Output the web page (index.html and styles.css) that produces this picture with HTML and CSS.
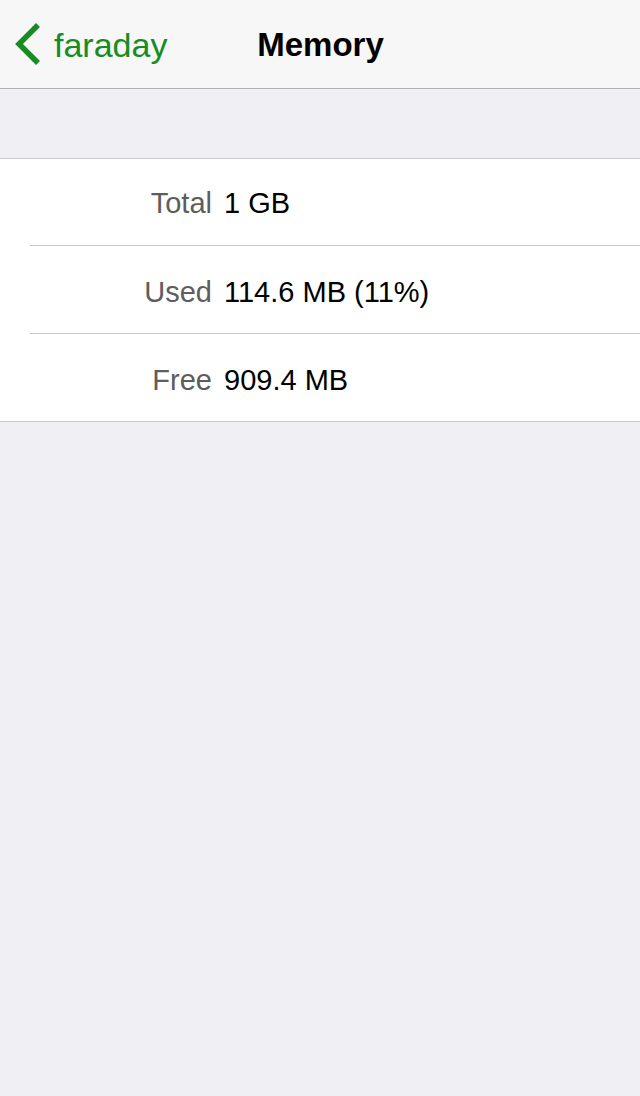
FILE: index.html
```html
<!DOCTYPE html>
<html>
<head>
<meta charset="utf-8">
<link rel="stylesheet" href="styles.css">
</head>
<body>
<header class="navbar">
  <a class="back">
    <svg class="chevron" width="30" height="42" viewBox="0 0 30 42"><path d="M24 2 L5 21 L24 40" fill="none" stroke="#168c22" stroke-width="5.5"/></svg>
    <span class="back-label">faraday</span>
  </a>
  <h1 class="title">Memory</h1>
</header>
<main class="content">
  <section class="group">
    <div class="row"><span class="label">Total</span><span class="value">1 GB</span></div>
    <div class="row"><span class="label">Used</span><span class="value">114.6 MB (11%)</span></div>
    <div class="row"><span class="label">Free</span><span class="value">909.4 MB</span></div>
  </section>
</main>
</body>
</html>
```
FILE: styles.css
```css
html, body {
  margin: 0;
  padding: 0;
  height: 100%;
}
body {
  background: #efeff4;
  font-family: "Liberation Sans", Arial, sans-serif;
}
.navbar {
  height: 89px;
  box-sizing: border-box;
  background: #f7f7f7;
  border-bottom: 1px solid #b2b2b2;
  position: relative;
  display: flex;
  align-items: center;
}
.back {
  display: flex;
  align-items: center;
  gap: 10px;
  padding-left: 14px;
  color: #168c22;
  font-size: 34px;
  height: 100%;
}
.chevron {
  display: block;
}
.back-label {
  line-height: 1;
  padding-top: 2px;
}
.title {
  position: absolute;
  left: 0;
  right: 0;
  top: 0;
  bottom: 0;
  margin: 0;
  display: flex;
  align-items: center;
  justify-content: center;
  font-size: 33px;
  font-weight: bold;
  color: #000;
  pointer-events: none;
  padding-top: 2px;
  padding-left: 1px;
}
.content {
  padding-top: 69px;
}
.group {
  background: #fff;
  border-top: 1px solid #c8c7cc;
  border-bottom: 1px solid #c8c7cc;
}
.row {
  display: flex;
  align-items: center;
  height: 86px;
  box-sizing: border-box;
  padding-top: 3px;
  margin-left: 30px;
  font-size: 29px;
}
.row + .row {
  height: 88px;
  padding-top: 5px;
  border-top: 1px solid #c8c7cc;
}
.label {
  width: 182px;
  text-align: right;
  color: #5d5d5d;
  margin-right: 12px;
}
.value {
  color: #000;
}
```
